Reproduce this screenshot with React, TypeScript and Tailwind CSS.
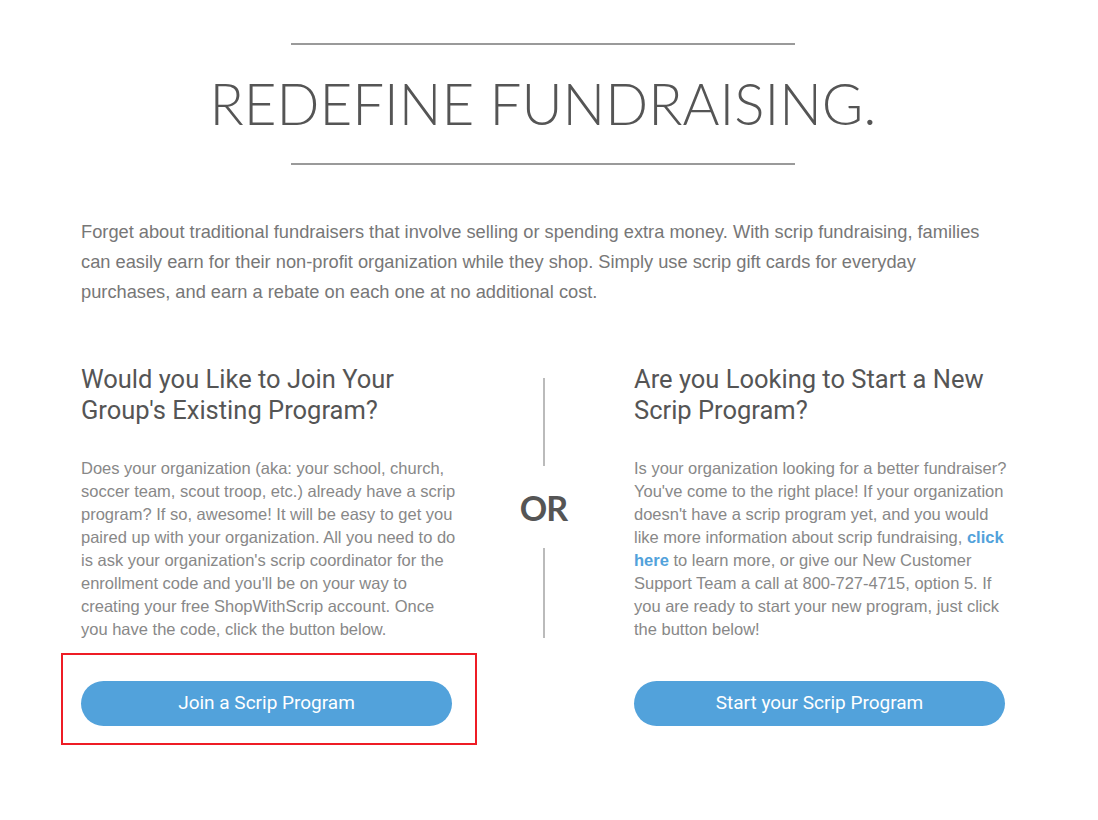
const heading = { fontFamily: "Roboto, 'Open Sans', sans-serif" };

const intro = [
	"Forget about traditional fundraisers that involve selling or spending extra money. With scrip fundraising, families",
	"can easily earn for their non-profit organization while they shop. Simply use scrip gift cards for everyday",
	"purchases, and earn a rebate on each one at no additional cost.",
];

const joinText = [
	"Does your organization (aka: your school, church,",
	"soccer team, scout troop, etc.) already have a scrip",
	"program? If so, awesome! It will be easy to get you",
	"paired up with your organization. All you need to do",
	"is ask your organization's scrip coordinator for the",
	"enrollment code and you'll be on your way to",
	"creating your free ShopWithScrip account. Once",
	"you have the code, click the button below.",
];

function ScripButton({ label }: { label: string }) {
	return (
		<button
			className="w-full h-[45px] rounded-full bg-[#52a2db] text-white text-[19px]"
			style={heading}
		>
			{label}
		</button>
	);
}

export default function App() {
	return (
		<div
			className="min-h-screen bg-white text-[#777]"
			style={{ fontFamily: "'Liberation Sans', Arial, sans-serif" }}
		>
			<div className="w-[924px] ml-[81px] pt-[43px]">
				{/* title block */}
				<div className="flex flex-col items-center">
					<div className="w-[504px] h-[2px] bg-[#9a9a9a]" />
					<h1
						className="mt-[22px] text-[56.5px] leading-[72px] font-light text-[#555]"
						style={{ fontFamily: "Lato, sans-serif" }}
					>
						REDEFINE FUNDRAISING.
					</h1>
					<div className="mt-[24px] w-[504px] h-[2px] bg-[#9a9a9a]" />
				</div>

				<p className="mt-[52px] text-[18.25px] leading-[30px] text-[#777]">
					{intro.map((line) => (
						<span key={line} className="block whitespace-nowrap">
							{line}
						</span>
					))}
				</p>

				<div className="flex mt-[57px]">
					{/* left column */}
					<div className="w-[372px] flex flex-col">
						<h2 className="text-[25.5px] leading-[31px] text-[#555]" style={heading}>
							Would you Like to Join Your Group's Existing Program?
						</h2>
						<p className="mt-[31px] text-[16.5px] leading-[23px] text-[#888] h-[184px]">
							{joinText.map((line) => (
								<span key={line} className="block whitespace-nowrap">
									{line}
								</span>
							))}
						</p>
						<div className="mt-[12px] ml-[-20px] w-[416px] border-2 border-[#ee1c25] pt-[26px] pb-[17px] pl-[18px] pr-[23px]">
							<ScripButton label="Join a Scrip Program" />
						</div>
					</div>

					{/* divider */}
					<div className="w-[181px] flex flex-col items-center pt-[14px]">
						<div className="w-[2px] h-[88px] bg-[#bbb]" />
						<div
							className="h-[82px] flex items-center text-[34px] font-bold text-[#555] tracking-[-1px]"
							style={{ fontFamily: "Lato, 'Open Sans', sans-serif" }}
						>
							OR
						</div>
						<div className="w-[2px] h-[90px] bg-[#bbb]" />
					</div>

					{/* right column */}
					<div className="w-[371px] flex flex-col">
						<h2 className="text-[25.5px] leading-[31px] text-[#555]" style={heading}>
							Are you Looking to Start a New Scrip Program?
						</h2>
						<p className="mt-[31px] text-[16.5px] leading-[23px] text-[#888] h-[184px] whitespace-nowrap">
							<span className="block">Is your organization looking for a better fundraiser?</span>
							<span className="block">You've come to the right place! If your organization</span>
							<span className="block">doesn't have a scrip program yet, and you would</span>
							<span className="block">
								like more information about scrip fundraising,{" "}
								<a className="font-bold text-[#52a2db]" href="#">
									click
								</a>
							</span>
							<span className="block">
								<a className="font-bold text-[#52a2db]" href="#">
									here
								</a>{" "}
								to learn more, or give our New Customer
							</span>
							<span className="block">Support Team a call at 800-727-4715, option 5. If</span>
							<span className="block">you are ready to start your new program, just click</span>
							<span className="block">the button below!</span>
						</p>
						<div className="mt-[40px]">
							<ScripButton label="Start your Scrip Program" />
						</div>
					</div>
				</div>
			</div>
		</div>
	);
}
